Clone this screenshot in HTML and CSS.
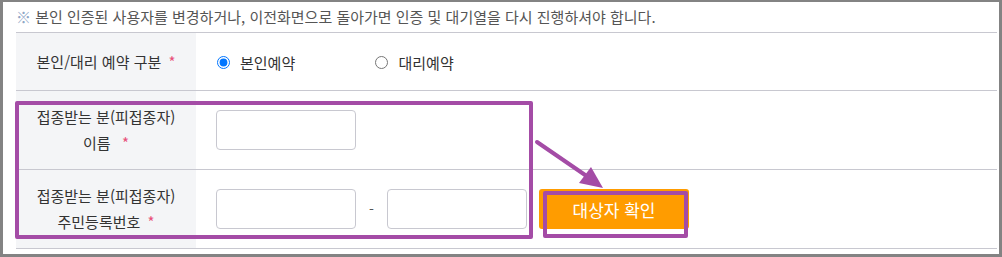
FILE: index.html
```html
<!DOCTYPE html>
<html lang="ko">
<head>
  <meta charset="UTF-8">
  <meta name="viewport" content="width=device-width, initial-scale=1.0">
  <title>예약 대상자 확인</title>
  <link rel="stylesheet" href="styles.css">
</head>
<body>
  <div class="frame">
    <!-- Notice -->
    <p class="notice"><span class="mark">※</span> 본인 인증된 사용자를 변경하거나, 이전화면으로 돌아가면 인증 및 대기열을 다시 진행하셔야 합니다.</p>

    <!-- Reservation form -->
    <table class="form-table">
      <tr class="row-type">
        <th>본인/대리 예약 구분 <span class="req">*</span></th>
        <td>
          <label class="option"><input type="radio" name="type" checked> 본인예약</label>
          <label class="option"><input type="radio" name="type"> 대리예약</label>
        </td>
      </tr>
      <tr class="row-person">
        <th>접종받는 분(피접종자)<br>이름 &nbsp;<span class="req">*</span></th>
        <td><input type="text" class="field"></td>
      </tr>
      <tr class="row-person">
        <th>접종받는 분(피접종자)<br>주민등록번호 <span class="req">*</span></th>
        <td>
          <div class="id-group">
            <input type="text" class="field">
            <span class="dash">-</span>
            <input type="password" class="field">
            <button type="button" class="check-btn">대상자 확인</button>
          </div>
        </td>
      </tr>
    </table>

    <!-- Annotations -->
    <div class="callout callout-fields"></div>
    <div class="callout callout-btn"></div>
    <svg class="arrow" width="1002" height="257" viewBox="0 0 1002 257">
      <line x1="537" y1="142" x2="588" y2="177" stroke="#a44ca6" stroke-width="4" stroke-linecap="round"/>
      <polygon points="579,183 591,167 603,188" fill="#a44ca6"/>
    </svg>
  </div>
</body>
</html>
```

FILE: styles.css
```css
:root {
  --frame-color: #838383;
  --line-color: #c8c8d0;
  --label-bg: #f4f5f7;
  --text-color: #333;
  --req-color: #e8507a;
  --callout-color: #a44ca6;
  --button-color: #ff9c00;
  --font-family: "Noto Sans CJK KR", "Noto Sans", sans-serif;
}

* {
  margin: 0;
  padding: 0;
  box-sizing: border-box;
}

body {
  font-family: var(--font-family);
  color: var(--text-color);
  background: #fff;
}

/* Outer frame */
.frame {
  position: relative;
  width: 1002px;
  height: 257px;
  border: 3px solid var(--frame-color);
  border-top-width: 2px;
  padding: 0 2px 0 13px;
  background: #fff;
}

.notice {
  height: 30px;
  line-height: 30px;
  font-size: 15px;
  color: #555;
}

.notice .mark {
  color: #8fa6c6;
}

/* Form table */
.form-table {
  width: 981px;
  border-collapse: separate;
  border-spacing: 0;
  border-top: 1px solid var(--line-color);
}

.form-table th,
.form-table td {
  border-bottom: 1px solid var(--line-color);
  vertical-align: middle;
  padding: 0;
}

.form-table th {
  width: 180px;
  background: var(--label-bg);
  font-weight: normal;
  font-size: 15px;
  line-height: 26px;
  text-align: center;
  color: var(--text-color);
}

.form-table td {
  padding-left: 20px;
}

.row-type th,
.row-type td {
  height: 58px;
}

.row-person th,
.row-person td {
  height: 79px;
}

.req {
  color: var(--req-color);
  font-size: 15px;
  margin-left: 3px;
}

/* Radio options */
.option {
  display: inline-flex;
  align-items: center;
  width: 154px;
  font-size: 15px;
  color: var(--text-color);
  cursor: pointer;
}

.option input {
  width: 13px;
  height: 13px;
  margin: 0 10px 0 1px;
}

/* Text fields */
.field {
  display: block;
  width: 140px;
  height: 40px;
  border: 1px solid var(--line-color);
  border-radius: 4px;
  padding: 0 10px;
  font-size: 14px;
  outline: none;
}

.id-group {
  display: flex;
  align-items: center;
}

.dash {
  width: 31px;
  text-align: center;
  font-size: 14px;
  color: #555;
}

.check-btn {
  width: 150px;
  height: 40px;
  margin-left: 12px;
  background: var(--button-color);
  color: #fff;
  border: none;
  border-radius: 3px;
  font-family: var(--font-family);
  font-size: 17px;
  cursor: pointer;
}

/* Annotation overlays */
.callout {
  position: absolute;
  border: 4px solid var(--callout-color);
  border-radius: 2px;
  pointer-events: none;
}

.callout-fields {
  left: 12px;
  top: 99px;
  width: 518px;
  height: 138px;
}

.callout-btn {
  left: 540px;
  top: 189px;
  width: 145px;
  height: 47px;
}

.arrow {
  position: absolute;
  left: -3px;
  top: -2px;
  pointer-events: none;
}
```
